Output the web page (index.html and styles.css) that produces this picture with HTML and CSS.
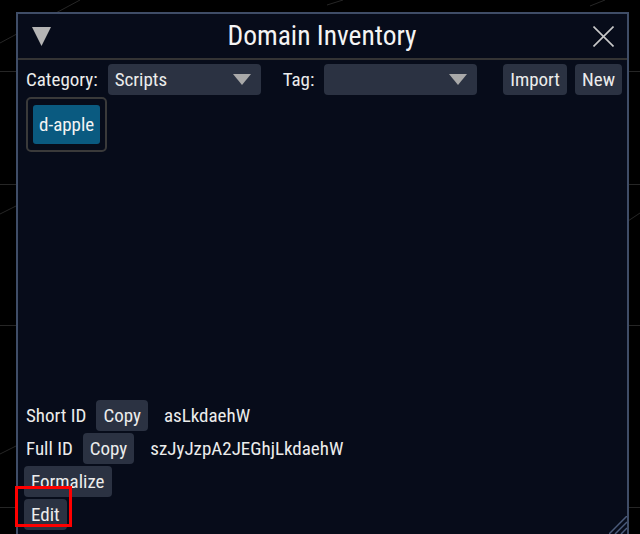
FILE: index.html
```html
<!DOCTYPE html>
<html lang="en">
<head>
<meta charset="utf-8">
<title>Domain Inventory</title>
<link rel="stylesheet" href="styles.css">
</head>
<body>
<svg class="backdrop" width="640" height="534" viewBox="0 0 640 534">
  <g stroke="#262626" stroke-width="1" fill="none">
    <line x1="0" y1="71.5" x2="640" y2="71.5"/>
    <line x1="0" y1="184.5" x2="640" y2="184.5"/>
    <line x1="0" y1="325.5" x2="640" y2="325.5"/>
    <line x1="0" y1="507.5" x2="640" y2="507.5"/>
    <line x1="0" y1="43" x2="80" y2="0"/>
    <line x1="0" y1="214" x2="16" y2="206"/>
    <line x1="0" y1="454" x2="16" y2="446"/>
    <line x1="628" y1="221" x2="640" y2="213"/>
    <line x1="327" y1="5" x2="343" y2="0"/>
    <line x1="590" y1="6" x2="605" y2="0"/>
  </g>
</svg>
<div class="window">
  <div class="titlebar">
    <svg class="collapse" width="19" height="19" viewBox="0 0 19 19"><polygon points="0,0 19,0 9.5,19"/></svg>
    <div class="title">Domain Inventory</div>
    <svg class="close" width="21" height="21" viewBox="0 0 21 21"><path d="M0.5 0.5 L20.5 20.5 M20.5 0.5 L0.5 20.5"/></svg>
  </div>
  <div class="content">
    <div class="toolbar">
      <span class="label">Category:</span>
      <div class="select">
        <span class="select-text">Scripts</span>
        <svg class="caret" width="18" height="11" viewBox="0 0 18 11"><polygon points="0,0 18,0 9,11"/></svg>
      </div>
      <span class="label tag-label">Tag:</span>
      <div class="select">
        <span class="select-text"></span>
        <svg class="caret" width="18" height="11" viewBox="0 0 18 11"><polygon points="0,0 18,0 9,11"/></svg>
      </div>
      <button class="btn push">Import</button>
      <button class="btn">New</button>
    </div>
    <div class="chips">
      <span class="chip">d-apple</span>
    </div>
    <div class="details">
      <div class="row">
        <span class="label">Short ID</span>
        <button class="btn">Copy</button>
        <span class="value">asLkdaehW</span>
      </div>
      <div class="row">
        <span class="label">Full ID</span>
        <button class="btn">Copy</button>
        <span class="value">szJyJzpA2JEGhjLkdaehW</span>
      </div>
      <div class="row">
        <button class="btn">Formalize</button>
      </div>
      <div class="row">
        <button class="btn">Edit</button>
      </div>
    </div>
  </div>
  <svg class="grip" width="18" height="18" viewBox="0 0 18 18">
    <g stroke="#4b5b7a" stroke-width="1.5">
      <line x1="0" y1="18" x2="18" y2="0"/>
      <line x1="6" y1="18" x2="18" y2="6"/>
      <line x1="12" y1="18" x2="18" y2="12"/>
    </g>
  </svg>
</div>
<div class="highlight"></div>
</body>
</html>
```
FILE: styles.css
```css
* {
  box-sizing: border-box;
}

html, body {
  margin: 0;
  padding: 0;
}

body {
  width: 640px;
  height: 534px;
  overflow: hidden;
  position: relative;
  background: #000000;
  font-family: "Roboto Condensed", "Roboto", "Liberation Sans Narrow", sans-serif;
  font-stretch: 85%;
  font-size: 19px;
  color: #ececec;
}

.backdrop {
  position: absolute;
  left: 0;
  top: 0;
}

.window {
  position: absolute;
  left: 16px;
  top: 12px;
  width: 613px;
  height: 524px;
  background: #070c1a;
  border: 2px solid #3f4d67;
  display: flex;
  flex-direction: column;
}

.titlebar {
  height: 46px;
  flex: none;
  display: flex;
  align-items: center;
  padding: 0 13px 0 14px;
  border-bottom: 2px solid #343434;
}

.collapse {
  fill: #b4b4b4;
  flex: none;
}

.title {
  flex: 1;
  text-align: center;
  font-size: 27.5px;
  color: #f4f4f4;
  line-height: 44px;
}

.close {
  flex: none;
  stroke: #c8c8c8;
  stroke-width: 1.6;
  fill: none;
}

.content {
  flex: 1;
  display: flex;
  flex-direction: column;
  padding: 4px 5px 4px 6px;
}

.toolbar {
  display: flex;
  height: 31px;
  align-items: stretch;
}

.label {
  line-height: 31px;
  margin-left: 2px;
  margin-right: 10px;
}

.toolbar .label {
  margin-right: 10px;
}

.toolbar .tag-label {
  margin-left: 22px;
}

.select {
  width: 153px;
  height: 31px;
  background: #2b3242;
  border-radius: 4px;
  display: flex;
  align-items: center;
  justify-content: space-between;
  padding: 0 10px 0 7px;
}

.select-text {
  line-height: 31px;
}

.caret {
  fill: #a9a9a9;
}

.btn {
  font: inherit;
  color: #ececec;
  background: #2b3242;
  border: none;
  border-radius: 4px;
  height: 31px;
  padding: 0 7px;
  line-height: 31px;
  margin: 0;
}

.btn.push {
  margin-left: auto;
  margin-right: 8px;
}

.chips {
  align-self: flex-start;
  margin-top: 2px;
  margin-left: 2px;
  border: 2px solid #3a3a3a;
  border-radius: 5px;
  padding: 6px 5px;
  display: flex;
}

.chip {
  height: 39px;
  line-height: 39px;
  padding: 0 6px;
  background: #0a5a80;
  color: #f4f4f4;
  border-radius: 3px;
}

.details {
  margin-top: auto;
  display: flex;
  flex-direction: column;
  gap: 2px;
}

.row {
  display: flex;
  height: 31px;
  align-items: center;
}

.value {
  margin-left: 16px;
  line-height: 31px;
}

.grip {
  position: absolute;
  right: 0;
  bottom: 0;
}

.highlight {
  position: absolute;
  left: 15px;
  top: 486px;
  width: 57px;
  height: 41px;
  border: 3px solid #ff0000;
}
```
